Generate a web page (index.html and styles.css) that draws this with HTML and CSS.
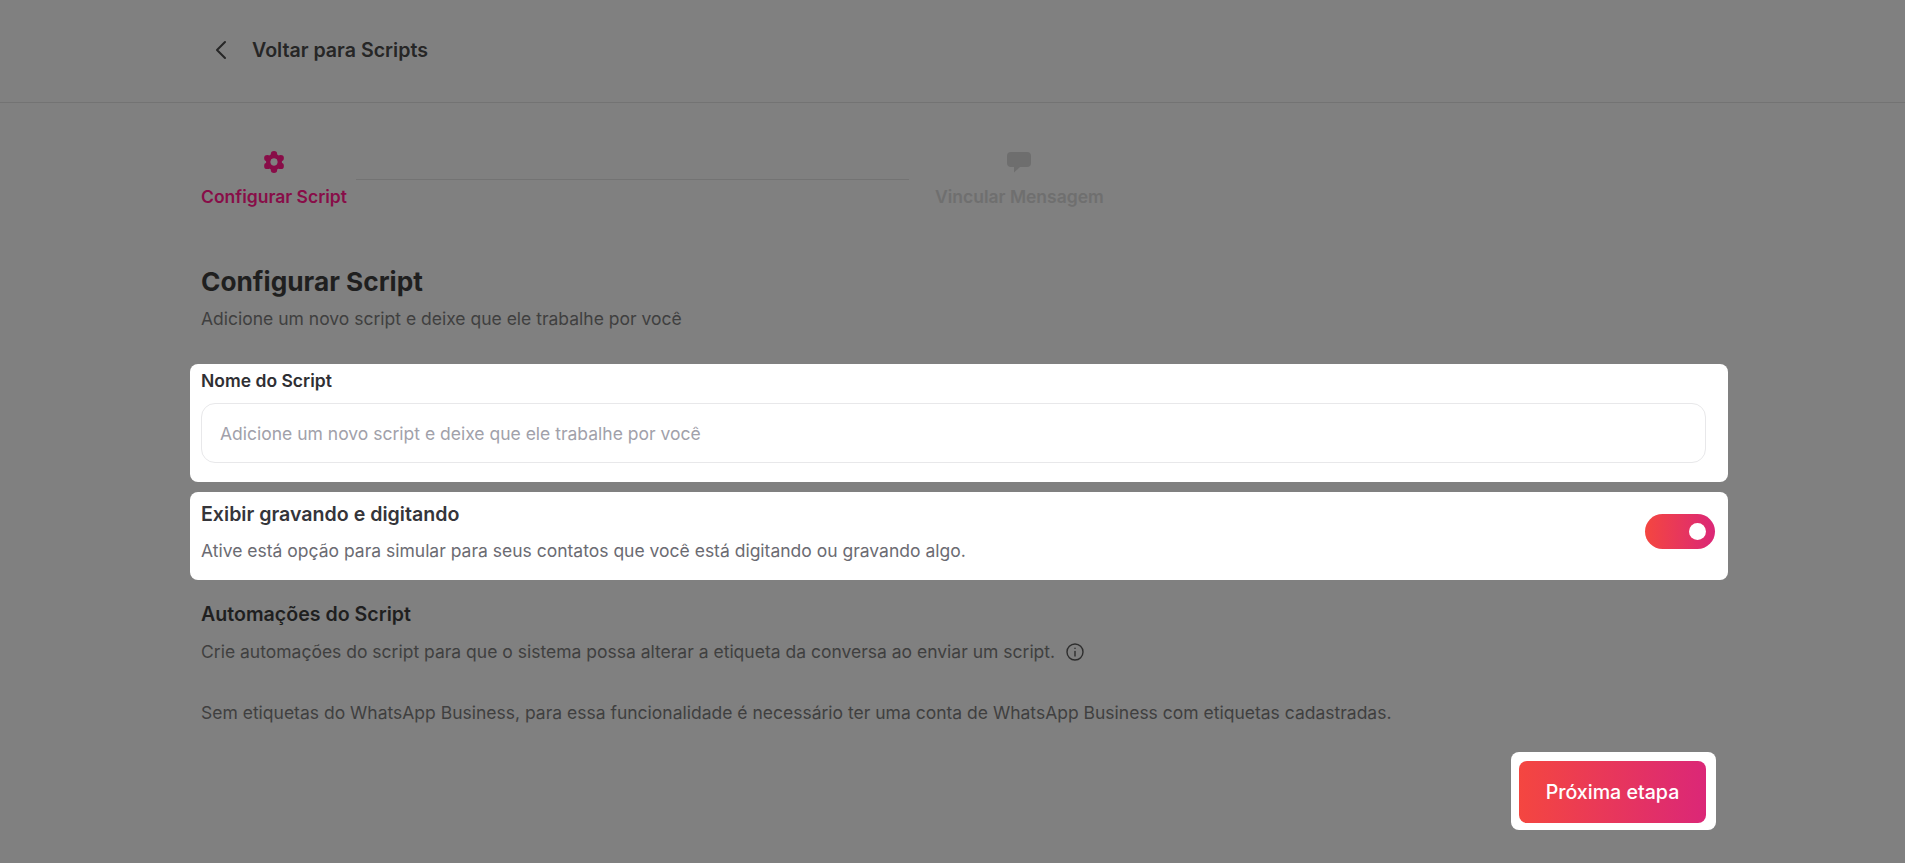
FILE: index.html
```html
<!DOCTYPE html>
<html>
    <head>
        <title>Configurar Script</title>
        <meta charset="utf-8">
        <link rel="stylesheet" href="styles.css">
    </head>
    <body>
        <div class="topbar">
            <svg class="back-icon" width="14" height="20" viewBox="0 0 14 20" fill="none" stroke="#262626" stroke-width="2" stroke-linecap="round" stroke-linejoin="round">
                <path d="M11 2 L3 10 L11 18"/>
            </svg>
            <span class="back-text">Voltar para Scripts</span>
        </div>

        <div class="main">
            <div class="steps">
                <div class="step step-active">
                    <svg width="24" height="24" viewBox="0 0 24 24">
                        <g fill="#880d48">
                            <circle cx="12" cy="4.3" r="3.2"/>
                            <circle cx="12" cy="19.7" r="3.2"/>
                            <circle cx="5.3" cy="8.1" r="3.2"/>
                            <circle cx="18.7" cy="8.1" r="3.2"/>
                            <circle cx="5.3" cy="15.9" r="3.2"/>
                            <circle cx="18.7" cy="15.9" r="3.2"/>
                        </g>
                        <circle cx="12" cy="12" r="5.7" fill="none" stroke="#880d48" stroke-width="4.6"/>
                        <circle cx="12" cy="12" r="3.4" fill="#808080"/>
                    </svg>
                    <span>Configurar Script</span>
                </div>
                <div class="step-line"></div>
                <div class="step">
                    <svg width="24" height="24" viewBox="0 0 24 24">
                        <path fill="#6e6e6e" d="M4 2 H20 Q24 2 24 6 V13 Q24 17 20 17 H13 L7 22.5 V17 H4 Q0 17 0 13 V6 Q0 2 4 2 Z"/>
                    </svg>
                    <span>Vincular Mensagem</span>
                </div>
            </div>

            <h1>Configurar Script</h1>
            <p class="subtitle">Adicione um novo script e deixe que ele trabalhe por você</p>

            <div class="spot name-card">
                <label>Nome do Script</label>
                <div class="fake-input">Adicione um novo script e deixe que ele trabalhe por você</div>
            </div>

            <div class="spot typing-card">
                <div class="typing-text">
                    <h2>Exibir gravando e digitando</h2>
                    <p class="typing-desc">Ative está opção para simular para seus contatos que você está digitando ou gravando algo.</p>
                </div>
                <div class="toggle"><div class="knob"></div></div>
            </div>

            <h2 class="auto-title">Automações do Script</h2>
            <p class="auto-text">
                Crie automações do script para que o sistema possa alterar a etiqueta da conversa ao enviar um script.
                <svg class="info-icon" width="20" height="20" viewBox="0 0 20 20" fill="none" stroke="#2e2e2e" stroke-width="1.4" stroke-linecap="round">
                    <circle cx="10" cy="10" r="8"/>
                    <path d="M10 9.5 V14"/>
                    <path d="M10 6.2 V6.4"/>
                </svg>
            </p>
            <p class="auto-note">Sem etiquetas do WhatsApp Business, para essa funcionalidade é necessário ter uma conta de WhatsApp Business com etiquetas cadastradas.</p>

            <div class="actions">
                <div class="button-spot">
                    <button>Próxima etapa</button>
                </div>
            </div>
        </div>
    </body>
</html>
```

FILE: styles.css
```css
html, body {height: 100%;}
body {margin: 0; background: #808080; overflow: hidden; font-family: Inter, "Liberation Sans", sans-serif; font-size: 17.5px; color: #2a2a2a;}

.topbar {display: flex; align-items: center; height: 100px; padding: 0px 0px 2px 214px; border-bottom: 1px solid #737373;}
.back-icon {margin-right: 24px;}
.back-text {font-size: 19.6px; font-weight: 600; color: #262626;}

.main {width: 1505px; margin-left: 201px;}

.steps {display: flex; align-items: flex-start; margin-top: 47px;}
.step {display: flex; flex-direction: column; align-items: center; color: #6f6f6f; font-weight: 600; font-size: 17.5px;}
.step svg {margin-bottom: 12px;}
.step span {line-height: 22px;}
.step-active {color: #880d48;}
.step-line {width: 553px; height: 1px; margin: 29px 26px 0px 9px; background: #737373;}

h1 {margin: 57px 0px 0px; font-size: 26.25px; line-height: 34px; font-weight: 700; color: #1f1f1f;}
.subtitle {margin: 8px 0px 0px; line-height: 24px; color: #3f3f3f;}

.spot {margin: 0px -22px 0px -11px; padding: 0px 22px 0px 11px; background: #fff; border-radius: 8px;}

.name-card {margin-top: 33px; height: 118px; box-sizing: border-box; padding-top: 5px;}
.name-card label {display: block; font-weight: 600; line-height: 24px; color: #2f2f33;}
.fake-input {box-sizing: border-box; height: 60px; margin-top: 10px; padding-left: 18px; border: 1px solid #e8e8ea; border-radius: 14px; line-height: 59px; color: #a1a1aa;}

.typing-card {display: flex; justify-content: space-between; align-items: flex-start; margin-top: 10px; height: 88px; padding-right: 13px;}
.typing-text {padding-top: 10px;}
h2 {margin: 0px; font-size: 19.6px; line-height: 24px; font-weight: 600; color: #35353a;}
.typing-desc {margin: 13px 0px 0px; line-height: 24px; color: #6b6b72;}

.toggle {display: flex; align-items: center; justify-content: flex-end; width: 70px; height: 35px; margin-top: 22px; padding-right: 9px; box-sizing: border-box; border-radius: 18px; background: linear-gradient(90deg, #f44640, #db2777);}
.knob {width: 17px; height: 17px; border-radius: 50%; background: #fff;}

.auto-title {margin-top: 22px; color: #1f1f1f;}
.auto-text {display: flex; align-items: center; margin: 14px 0px 0px; line-height: 24px; color: #3f3f3f;}
.info-icon {margin-left: 10px;}
.auto-note {margin: 37px 0px 0px; line-height: 24px; color: #3f3f3f;}

.actions {display: flex; justify-content: flex-end; margin-top: 27px;}
.button-spot {padding: 9px 10px 7px 8px; margin-right: -10px; background: #fff; border-radius: 8px;}
button {display: block; width: 187px; height: 62px; padding: 0px; border: 0; border-radius: 8px; background: linear-gradient(90deg, #f44640, #db2777); color: #fff; font-family: Inter, "Liberation Sans", sans-serif; font-size: 19.6px; font-weight: 500;}
```
